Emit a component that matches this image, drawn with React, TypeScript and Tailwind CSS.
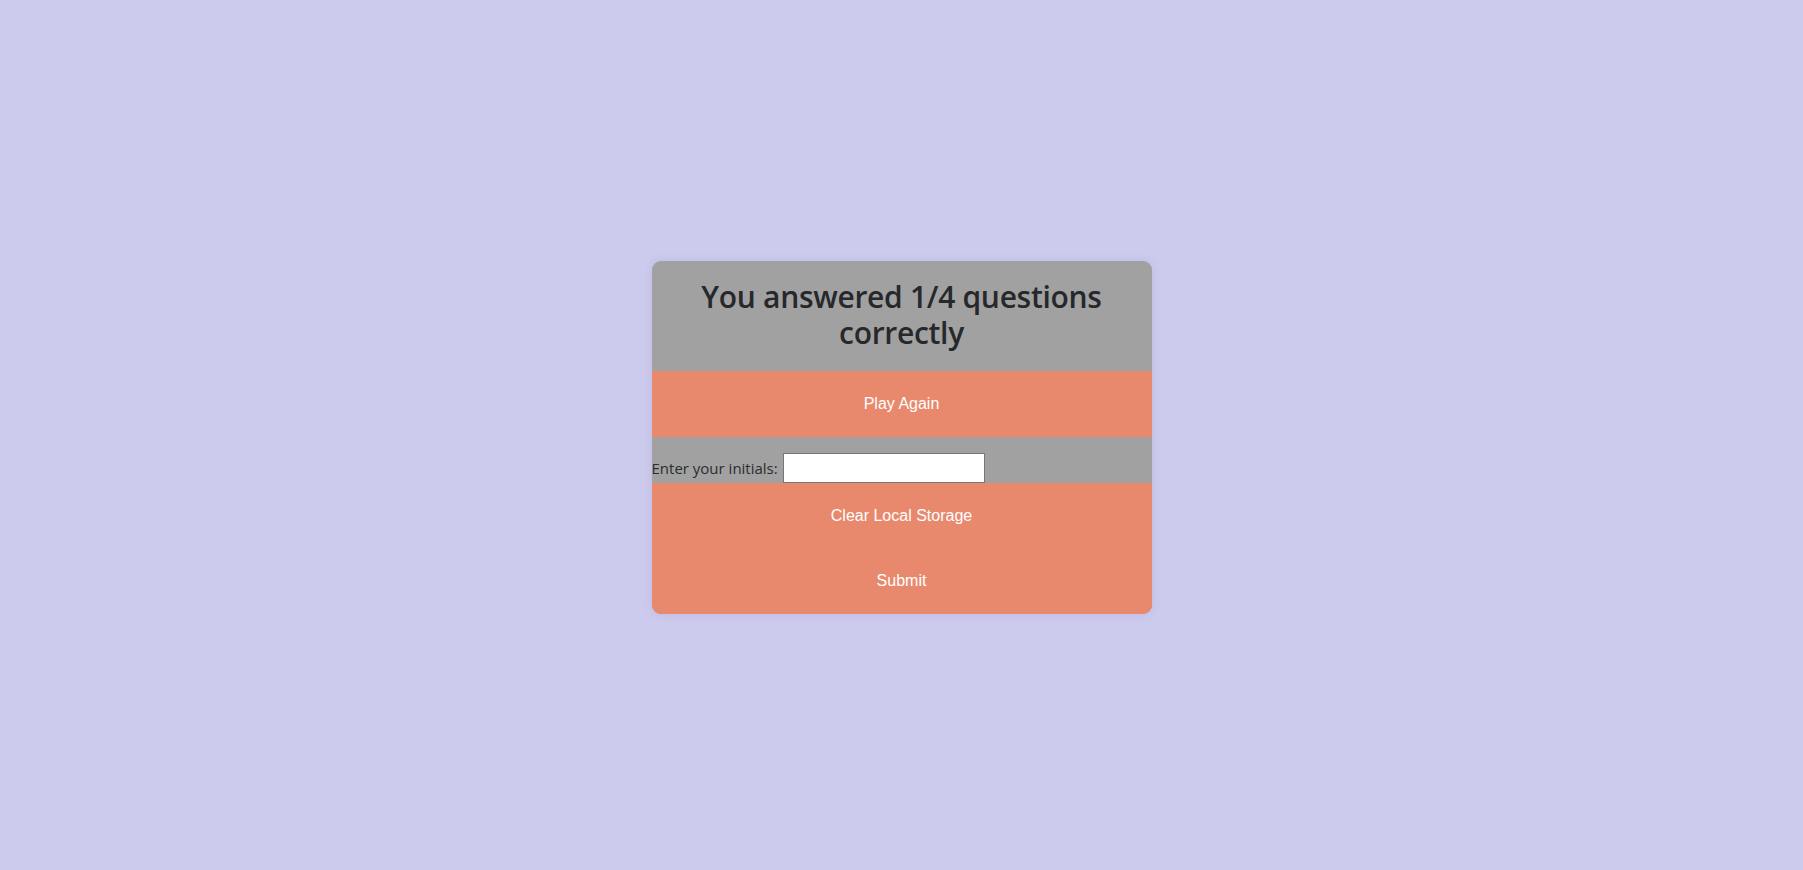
import React from "react";

export default function App() {
  return (
    <div className="min-h-screen w-full bg-[#cccbee] flex justify-center pt-[261px] font-['Open_Sans',sans-serif] text-[#212529]">
      <div className="w-[500px] h-fit rounded-[9px] bg-[#a1a1a1] shadow-[0_0_10px_rgba(80,80,140,0.12)] overflow-hidden flex flex-col">
        {/* Score */}
        <h1 className="px-4 pt-[18px] pb-[20px] text-center text-[30px] leading-[36px] font-semibold tracking-[-0.3px] text-[#26282b]">
          You answered 1/4 questions correctly
        </h1>

        <button className="h-[66px] w-full bg-[#e8896e] text-white text-base font-['Liberation_Sans',Arial,sans-serif]">
          Play Again
        </button>

        {/* Initials form */}
        <form className="flex items-end h-[46px]">
          <label className="text-[15px] leading-[24px] mb-[3px] mr-[5px] text-[#2b2d30]">
            Enter your initials:
          </label>
          <input
            type="text"
            className="w-[202px] h-[30px] bg-white border border-[#767676] outline-none px-1"
          />
        </form>

        <button className="h-[65px] w-full bg-[#e8896e] text-white text-base font-['Liberation_Sans',Arial,sans-serif]">
          Clear Local Storage
        </button>
        <button className="h-[66px] w-full bg-[#e8896e] text-white text-base font-['Liberation_Sans',Arial,sans-serif]">
          Submit
        </button>
      </div>
    </div>
  );
}
